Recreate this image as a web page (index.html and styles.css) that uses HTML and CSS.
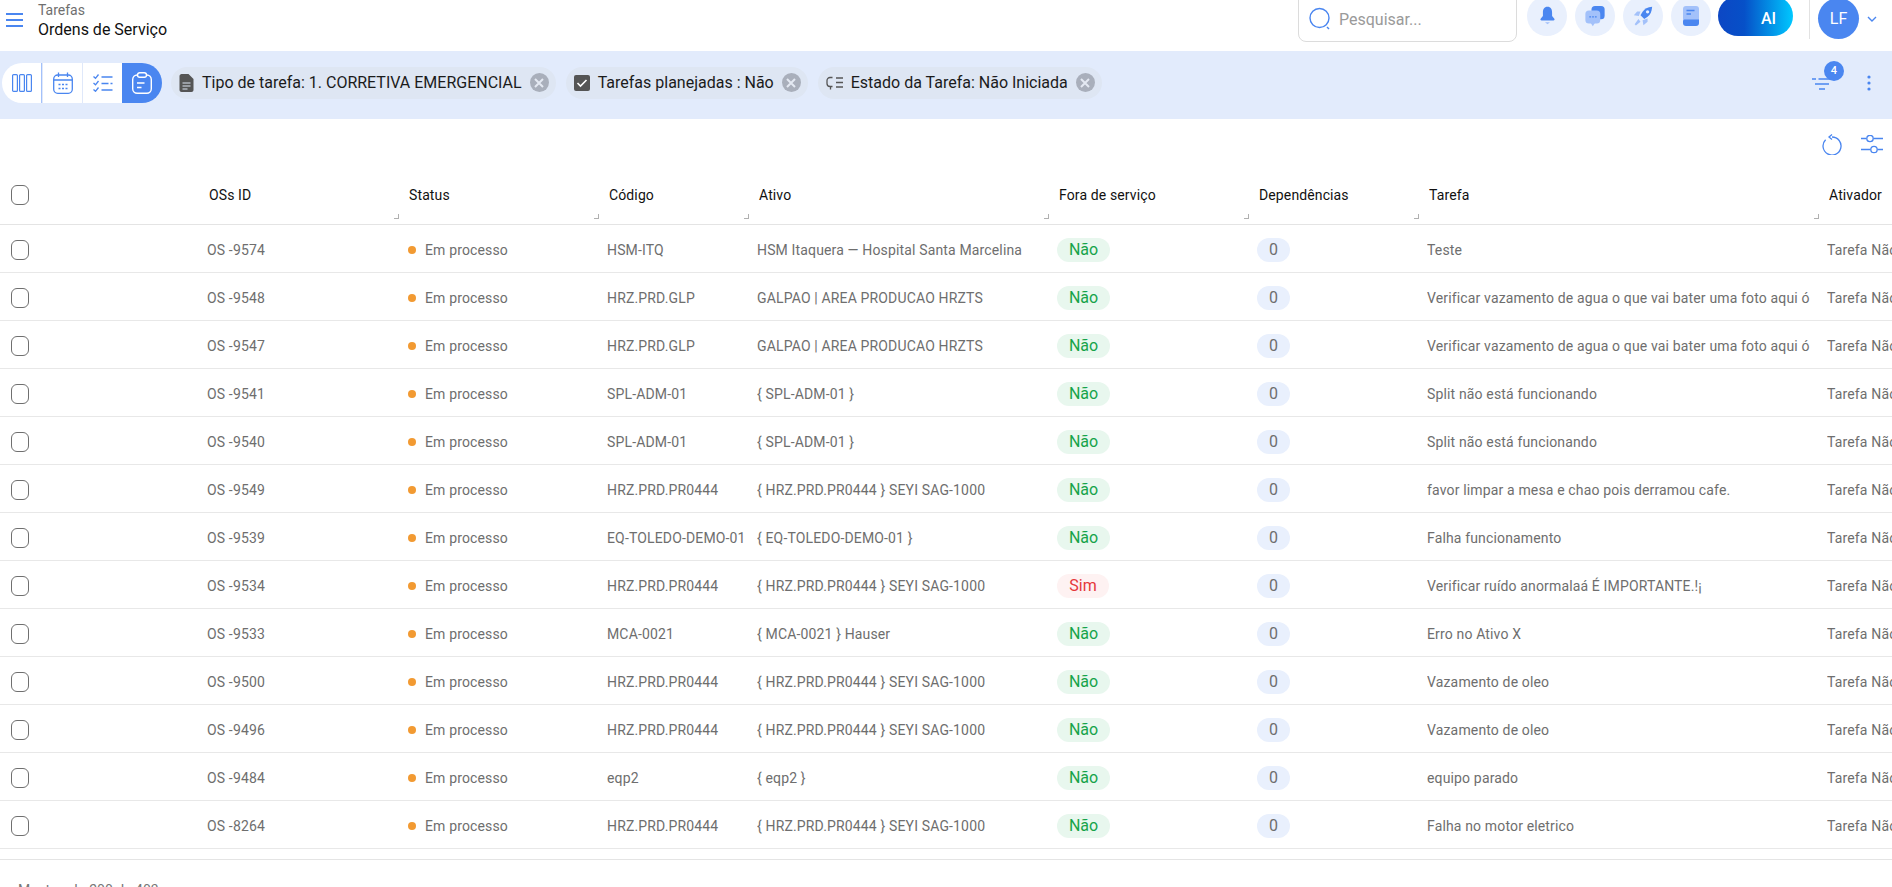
FILE: index.html
```html
<!DOCTYPE html>
<html lang="pt">
<head>
    <meta charset="UTF-8">
    <meta name="viewport" content="width=device-width, initial-scale=1.0">
    <title>Ordens de Serviço</title>
    <link rel="stylesheet" href="styles.css">
</head>
<body>
    <div class="page">
        <header class="topbar">
            <button class="menu-button">
                <svg width="20" height="16" viewBox="0 0 20 16"><path d="M1 2h17M1 8h17M1 14h17" stroke="#4a86f0" stroke-width="2"/></svg>
            </button>
            <div class="page-title">
                <div class="page-title-top">Tarefas</div>
                <div class="page-title-main">Ordens de Serviço</div>
            </div>
            <div class="search-box">
                <svg width="24" height="26" viewBox="0 0 24 26" fill="none"><circle cx="11.500" cy="12" r="9.500" stroke="#4a86f0" stroke-width="1.400"/><path d="M19 21l2 2" stroke="#4a86f0" stroke-width="1.400"/></svg>
                <span class="search-text">Pesquisar...</span>
            </div>
            <div class="round-icon">
                <svg width="17" height="20" viewBox="0 0 20 24"><path d="M10 1C6 1 4.500 4 4.500 8v4L2 15c-1 1-.5 2.500 1 2.500h14c1.500 0 2-1.500 1-2.500l-2.500-3V8c0-4-1.500-7-5.500-7z" fill="#4a86f0"/><path d="M7 19.500h6L10 22z" fill="#a3c1fa"/></svg>
            </div>
            <div class="round-icon">
                <svg width="20" height="21" viewBox="0 0 22 24"><rect x="7" y="0" width="15" height="15" rx="4" fill="#4a86f0"/><rect x="0" y="5" width="17" height="15" rx="4" fill="#a3c1fa"/><path d="M6 19h5l-2.500 4z" fill="#a3c1fa"/><path d="M4.500 12.500h2M7.700 12.500h2M10.900 12.500h2" stroke="#4a86f0" stroke-width="1.400"/></svg>
            </div>
            <div class="round-icon">
                <svg width="20" height="20" viewBox="0 0 24 24"><path d="M23 1c-5.500 .5-9 2.500-11.500 6L9 11l4.500 4.500 4-2.500c3.500-2.500 5-6.500 5.500-12z" fill="#4a86f0"/><circle cx="17.500" cy="7" r="2" fill="#e9f0fd"/><path d="M9 6.500H5L1 11l6 1zM17.500 15v4l-5 4-1-6zM6.500 15.500L2 22l1.500 1.500L9 19z" fill="#a3c1fa"/></svg>
            </div>
            <div class="round-icon">
                <svg width="16" height="20" viewBox="0 0 16 20"><path d="M0 3c0-2 1-3 3-3h10c2 0 3 1 3 3v11H0z" fill="#a3c1fa"/><path d="M0 15c0-1 1-1.500 2-1.500h14V17c0 2-1 3-3 3H3c-2 0-3-1-3-3z" fill="#4a86f0"/><path d="M3.500 4.500h8M3.500 8h4.500" stroke="#4a86f0" stroke-width="1.300"/></svg>
            </div>
            <div class="ai-button">AI</div>
            <div class="user-area">
                <div class="avatar">LF</div>
                <svg width="12" height="8" viewBox="0 0 12 8" fill="none"><path d="M2 2l4 4 4-4" stroke="#4a86f0" stroke-width="1.400"/></svg>
            </div>
        </header>

        <div class="filter-bar">
            <div class="view-switch">
                <div class="view-item view-first">
                    <svg width="20" height="18" viewBox="0 0 20 18" fill="none" stroke="#4a86f0" stroke-width="1.200"><rect x=".6" y=".6" width="4.800" height="16.800" rx="1"/><rect x="7.600" y=".6" width="4.800" height="16.800" rx="1"/><rect x="14.600" y=".6" width="4.800" height="16.800" rx="1"/></svg>
                </div>
                <div class="view-item">
                    <svg width="20" height="22" viewBox="0 0 20 22" fill="none" stroke="#4a86f0" stroke-width="1.300"><rect x=".7" y="3" width="18.600" height="18.300" rx="4"/><path d="M.7 8h18.600M5.500 .5v4.500M14.500 .5v4.500"/><path d="M5.500 12.500h2M9 12.500h2M12.500 12.500h2M5.500 16.500h2M9 16.500h2M12.500 16.500h2" stroke-width="1.600"/></svg>
                </div>
                <div class="view-item">
                    <svg width="20" height="18" viewBox="0 0 20 18" fill="none" stroke="#4a86f0" stroke-width="1.300"><path d="M.5 2.500l2 1.800L5.500 .5M.5 9l2 1.800L5.500 7M.5 15.500l2 1.800L5.500 13.500"/><path d="M8.500 3h11M8.500 9.500h7M17.500 9.500h2M8.500 16h11"/></svg>
                </div>
                <div class="view-item view-active">
                    <svg width="20" height="22" viewBox="0 0 20 22" fill="none" stroke="#fff" stroke-width="1.400"><rect x=".7" y="3" width="18.600" height="18.300" rx="4.500"/><rect x="5.500" y=".7" width="9" height="4.600" rx="2.200" fill="#4a86f0"/><path d="M5 11h7.500M5 15.500h4.500"/></svg>
                </div>
            </div>

            <div class="filter-chip">
                <svg width="15" height="18" viewBox="0 0 14 18"><path d="M0 2c0-1 1-2 2-2h7l5 5v11c0 1-1 2-2 2H2c-1 0-2-1-2-2z" fill="#555"/><path d="M3 9h8M3 12h8M3 15h5" stroke="#dee6f3" stroke-width="1.200"/></svg>
                <span>Tipo de tarefa: 1. CORRETIVA EMERGENCIAL</span>
                <span class="chip-close"><svg width="10" height="10" viewBox="0 0 10 10"><path d="M1 1l8 8M9 1l-8 8" stroke="#e4e9f2" stroke-width="2"/></svg></span>
            </div>
            <div class="filter-chip">
                <svg width="16" height="16" viewBox="0 0 16 16"><rect width="16" height="16" rx="2" fill="#555"/><path d="M3.500 8l3 3 6-6" fill="none" stroke="#fff" stroke-width="1.600"/></svg>
                <span>Tarefas planejadas : Não</span>
                <span class="chip-close"><svg width="10" height="10" viewBox="0 0 10 10"><path d="M1 1l8 8M9 1l-8 8" stroke="#e4e9f2" stroke-width="2"/></svg></span>
            </div>
            <div class="filter-chip">
                <svg width="17" height="14" viewBox="0 0 17 14" fill="none" stroke="#555" stroke-width="1.300"><path d="M6.500 1.500H4a3 3 0 0 0-3 3v3a3 3 0 0 0 3 3h2.500M4.500 11v2.500M10 2h7M10 6.500h7M10 11h7"/></svg>
                <span>Estado da Tarefa: Não Iniciada</span>
                <span class="chip-close"><svg width="10" height="10" viewBox="0 0 10 10"><path d="M1 1l8 8M9 1l-8 8" stroke="#e4e9f2" stroke-width="2"/></svg></span>
            </div>

            <div class="filter-actions">
                <div class="filter-icon">
                    <svg width="20" height="12" viewBox="0 0 20 12" fill="none" stroke="#4a86f0" stroke-width="1.300"><path d="M0 1h4M6.500 1H20M3 6h14M7 11h6"/></svg>
                    <span class="filter-count">4</span>
                </div>
                <svg width="6" height="16" viewBox="0 0 6 16"><circle cx="3" cy="2" r="1.600" fill="#4a86f0"/><circle cx="3" cy="8" r="1.600" fill="#4a86f0"/><circle cx="3" cy="14" r="1.600" fill="#4a86f0"/></svg>
            </div>
        </div>

        <div class="table-tools">
            <svg width="20" height="21" viewBox="0 0 20 21" fill="none" stroke="#4a86f0" stroke-width="1.300"><path d="M10 3a9 9 0 1 1-6.400 2.700"/><path d="M10 .5L7 3l3 2.500"/></svg>
            <svg width="22" height="19" viewBox="0 0 22 19" fill="none" stroke="#4a86f0" stroke-width="1.300"><circle cx="9" cy="3.500" r="3.200"/><circle cx="13" cy="14.500" r="3.200"/><path d="M0 3.500h5.500M12.500 3.500H22M0 14.500h9.500M16.500 14.500H22"/></svg>
        </div>

        <table class="os-table">
            <colgroup>
                <col class="col-check"><col class="col-id"><col class="col-status"><col class="col-code"><col class="col-asset"><col class="col-out"><col class="col-dep"><col class="col-task"><col class="col-trigger">
            </colgroup>
            <thead>
                <tr>
                    <th><span class="check-box"></span></th>
                    <th>OSs ID<i class="resize"></i></th>
                    <th>Status<i class="resize"></i></th>
                    <th>Código<i class="resize"></i></th>
                    <th>Ativo<i class="resize"></i></th>
                    <th>Fora de serviço<i class="resize"></i></th>
                    <th>Dependências<i class="resize"></i></th>
                    <th>Tarefa<i class="resize"></i></th>
                    <th>Ativador<i class="resize"></i></th>
                </tr>
            </thead>
            <tbody id="rows"></tbody>
        </table>
        <div class="table-end"></div>
        <div class="table-footer">Mostrando 200 de 403</div>
    </div>
    <script>
        var rows = [
            ['OS -9574', 'HSM-ITQ', 'HSM Itaquera — Hospital Santa Marcelina', 'Não', 'Teste'],
            ['OS -9548', 'HRZ.PRD.GLP', 'GALPAO | AREA PRODUCAO HRZTS', 'Não', 'Verificar vazamento de agua o que vai bater uma foto aqui ó'],
            ['OS -9547', 'HRZ.PRD.GLP', 'GALPAO | AREA PRODUCAO HRZTS', 'Não', 'Verificar vazamento de agua o que vai bater uma foto aqui ó'],
            ['OS -9541', 'SPL-ADM-01', '{ SPL-ADM-01 }', 'Não', 'Split não está funcionando'],
            ['OS -9540', 'SPL-ADM-01', '{ SPL-ADM-01 }', 'Não', 'Split não está funcionando'],
            ['OS -9549', 'HRZ.PRD.PR0444', '{ HRZ.PRD.PR0444 } SEYI SAG-1000', 'Não', 'favor limpar a mesa e chao pois derramou cafe.'],
            ['OS -9539', 'EQ-TOLEDO-DEMO-01', '{ EQ-TOLEDO-DEMO-01 }', 'Não', 'Falha funcionamento'],
            ['OS -9534', 'HRZ.PRD.PR0444', '{ HRZ.PRD.PR0444 } SEYI SAG-1000', 'Sim', 'Verificar ruído anormalaá É IMPORTANTE.!¡'],
            ['OS -9533', 'MCA-0021', '{ MCA-0021 } Hauser', 'Não', 'Erro no Ativo X'],
            ['OS -9500', 'HRZ.PRD.PR0444', '{ HRZ.PRD.PR0444 } SEYI SAG-1000', 'Não', 'Vazamento de oleo'],
            ['OS -9496', 'HRZ.PRD.PR0444', '{ HRZ.PRD.PR0444 } SEYI SAG-1000', 'Não', 'Vazamento de oleo'],
            ['OS -9484', 'eqp2', '{ eqp2 }', 'Não', 'equipo parado'],
            ['OS -8264', 'HRZ.PRD.PR0444', '{ HRZ.PRD.PR0444 } SEYI SAG-1000', 'Não', 'Falha no motor eletrico']
        ];
        var html = '';
        for (var i = 0; i < rows.length; i++) {
            var r = rows[i];
            html += '<tr>'
                + '<td><span class="check-box"></span></td>'
                + '<td>' + r[0] + '</td>'
                + '<td><span class="status-dot"></span>Em processo</td>'
                + '<td>' + r[1] + '</td>'
                + '<td>' + r[2] + '</td>'
                + '<td><span class="pill ' + (r[3] === 'Sim' ? 'pill-yes' : 'pill-no') + '">' + r[3] + '</span></td>'
                + '<td><span class="pill pill-count">0</span></td>'
                + '<td>' + r[4] + '</td>'
                + '<td>Tarefa Não Iniciada</td>'
                + '</tr>';
        }
        document.getElementById('rows').innerHTML = html;
    </script>
</body>
</html>
```

FILE: styles.css
```css
* {
    margin: 0;
    padding: 0;
    box-sizing: border-box;
}
html, body {
    height: 100%;
    overflow: hidden;
}
body {
    font-family: Roboto, "Liberation Sans", sans-serif;
    font-size: 14px;
    color: #222;
    background-color: #ffffff;
}
.page {
    width: 1892px;
    height: 887px;
    overflow: hidden;
}

/* top bar */
.topbar {
    height: 51px;
    display: flex;
    align-items: flex-start;
}
.menu-button {
    width: 38px;
    height: 36px;
    border: 0;
    background: none;
    padding: 6px 0 0 5px;
    text-align: left;
}
.page-title {
    flex-grow: 1;
    padding-top: 1px;
}
.page-title-top {
    font-size: 14px;
    line-height: 18px;
    color: #6f6f6f;
}
.page-title-main {
    font-size: 16px;
    line-height: 22px;
    color: #111;
}
.search-box {
    width: 219px;
    height: 43px;
    margin-top: -1px;
    margin-right: 2px;
    border: 1px solid #dcdcdc;
    border-radius: 0 0 8px 8px;
    display: flex;
    align-items: center;
    padding: 0 0 3px 9px;
    gap: 7px;
}
.search-text {
    font-size: 16px;
    color: #9a9a9a;
}
.round-icon {
    width: 40px;
    height: 40px;
    margin-top: -4px;
    margin-left: 8px;
    border-radius: 50%;
    background-color: #e9f0fd;
    display: flex;
    align-items: center;
    justify-content: center;
}
.ai-button {
    width: 75px;
    height: 40px;
    margin-top: -4px;
    margin-left: 7px;
    border-radius: 20px;
    background: linear-gradient(90deg, #0d47c4 0%, #0650c8 35%, #00c8ff 100%);
    color: #ffffff;
    font-size: 16px;
    font-weight: 500;
    padding: 13px 0 0 43px;
}
.user-area {
    height: 39px;
    width: 83px;
    margin-left: 16px;
    padding-left: 8px;
    border-left: 1px solid #e2e2e2;
    display: flex;
    align-items: flex-start;
    gap: 7px;
}
.user-area svg {
    margin-top: 15px;
}
.avatar {
    flex-shrink: 0;
    width: 41px;
    height: 41px;
    margin-top: -2px;
    border-radius: 50%;
    background-color: #4a86f0;
    color: #ffffff;
    font-size: 16px;
    text-align: center;
    line-height: 41px;
}

/* filters */
.filter-bar {
    height: 68px;
    background-color: #e2ebfc;
    display: flex;
    align-items: center;
    padding: 0 0 5px 2px;
}
.view-switch {
    display: flex;
    height: 40px;
    margin-right: 9px;
}
.view-item {
    width: 40px;
    background-color: #ffffff;
    border-left: 1px solid #dfe8fa;
    display: flex;
    align-items: center;
    justify-content: center;
}
.view-first {
    border-left: 0;
    border-right: 1px solid #a3c1fa;
    border-radius: 20px 0 0 20px;
    width: 40px;
}
.view-active {
    background-color: #4a86f0;
    border-radius: 0 20px 20px 0;
    border-left: 0;
}
.filter-chip {
    height: 32px;
    border-radius: 16px;
    background-color: #dee6f3;
    display: flex;
    align-items: center;
    font-size: 16px;
    color: #1b1b1b;
    padding: 0 7px 0 8px;
    gap: 8px;
    margin-right: 10px;
}
.chip-close {
    width: 19px;
    height: 19px;
    border-radius: 50%;
    background-color: #a9afbb;
    display: flex;
    align-items: center;
    justify-content: center;
}
.filter-actions {
    margin-left: auto;
    display: flex;
    align-items: center;
    gap: 34px;
    padding-right: 20px;
}
.filter-icon {
    position: relative;
    height: 12px;
    line-height: 0;
    margin-top: 3px;
}
.filter-count {
    position: absolute;
    top: -17px;
    left: 12px;
    width: 20px;
    height: 20px;
    border-radius: 50%;
    background-color: #4a86f0;
    color: #ffffff;
    font-size: 11px;
    font-weight: 500;
    line-height: 20px;
    text-align: center;
}

/* table */
.table-tools {
    height: 51px;
    display: flex;
    justify-content: flex-end;
    align-items: center;
    gap: 19px;
    padding-right: 9px;
}
.os-table {
    table-layout: fixed;
    border-collapse: collapse;
    width: 2227px;
}
.col-check { width: 207px; }
.col-id { width: 200px; }
.col-status { width: 200px; }
.col-code { width: 150px; }
.col-asset { width: 300px; }
.col-out { width: 200px; }
.col-dep { width: 170px; }
.col-task { width: 400px; }
.col-trigger { width: 400px; }
.os-table th {
    position: relative;
    height: 54px;
    padding: 0 0 3px 2px;
    border-bottom: 1px solid #e4e4e4;
    font-size: 14px;
    font-weight: 400;
    letter-spacing: .12px;
    color: #111;
    text-align: left;
    white-space: nowrap;
}
.os-table td {
    height: 48px;
    padding-top: 4px;
    border-bottom: 1px solid #e8e8e8;
    color: #6e6e6e;
    letter-spacing: .15px;
    white-space: nowrap;
    overflow: hidden;
}
.os-table th:first-child,
.os-table td:first-child {
    padding-left: 11px;
}
.check-box {
    display: block;
    width: 18px;
    height: 20px;
    border: 1px solid #6f6f6f;
    border-radius: 6px;
}
.resize {
    position: absolute;
    right: 8px;
    bottom: 5px;
    width: 5px;
    height: 5px;
    border-right: 1px solid #b0b0b0;
    border-bottom: 1px solid #b0b0b0;
}
.status-dot {
    display: inline-block;
    width: 8px;
    height: 8px;
    border-radius: 50%;
    background-color: #f29a32;
    margin: 0 9px 0 1px;
    vertical-align: 1px;
}
.pill {
    display: inline-block;
    height: 24px;
    line-height: 24px;
    font-size: 16px;
    letter-spacing: 0;
    text-align: center;
    border-radius: 12px;
    vertical-align: middle;
}
.pill-no {
    width: 53px;
    background-color: #e8f7ee;
    color: #16a34a;
}
.pill-yes {
    width: 52px;
    background-color: #fef2f2;
    color: #e5383b;
}
.pill-count {
    width: 33px;
    background-color: #e9f0fd;
    color: #6e6e6e;
}
.table-end {
    height: 11px;
    border-bottom: 1px solid #e4e4e4;
}
.table-footer {
    padding: 22px 0 0 18px;
    color: #777;
    font-size: 14px;
}
```
